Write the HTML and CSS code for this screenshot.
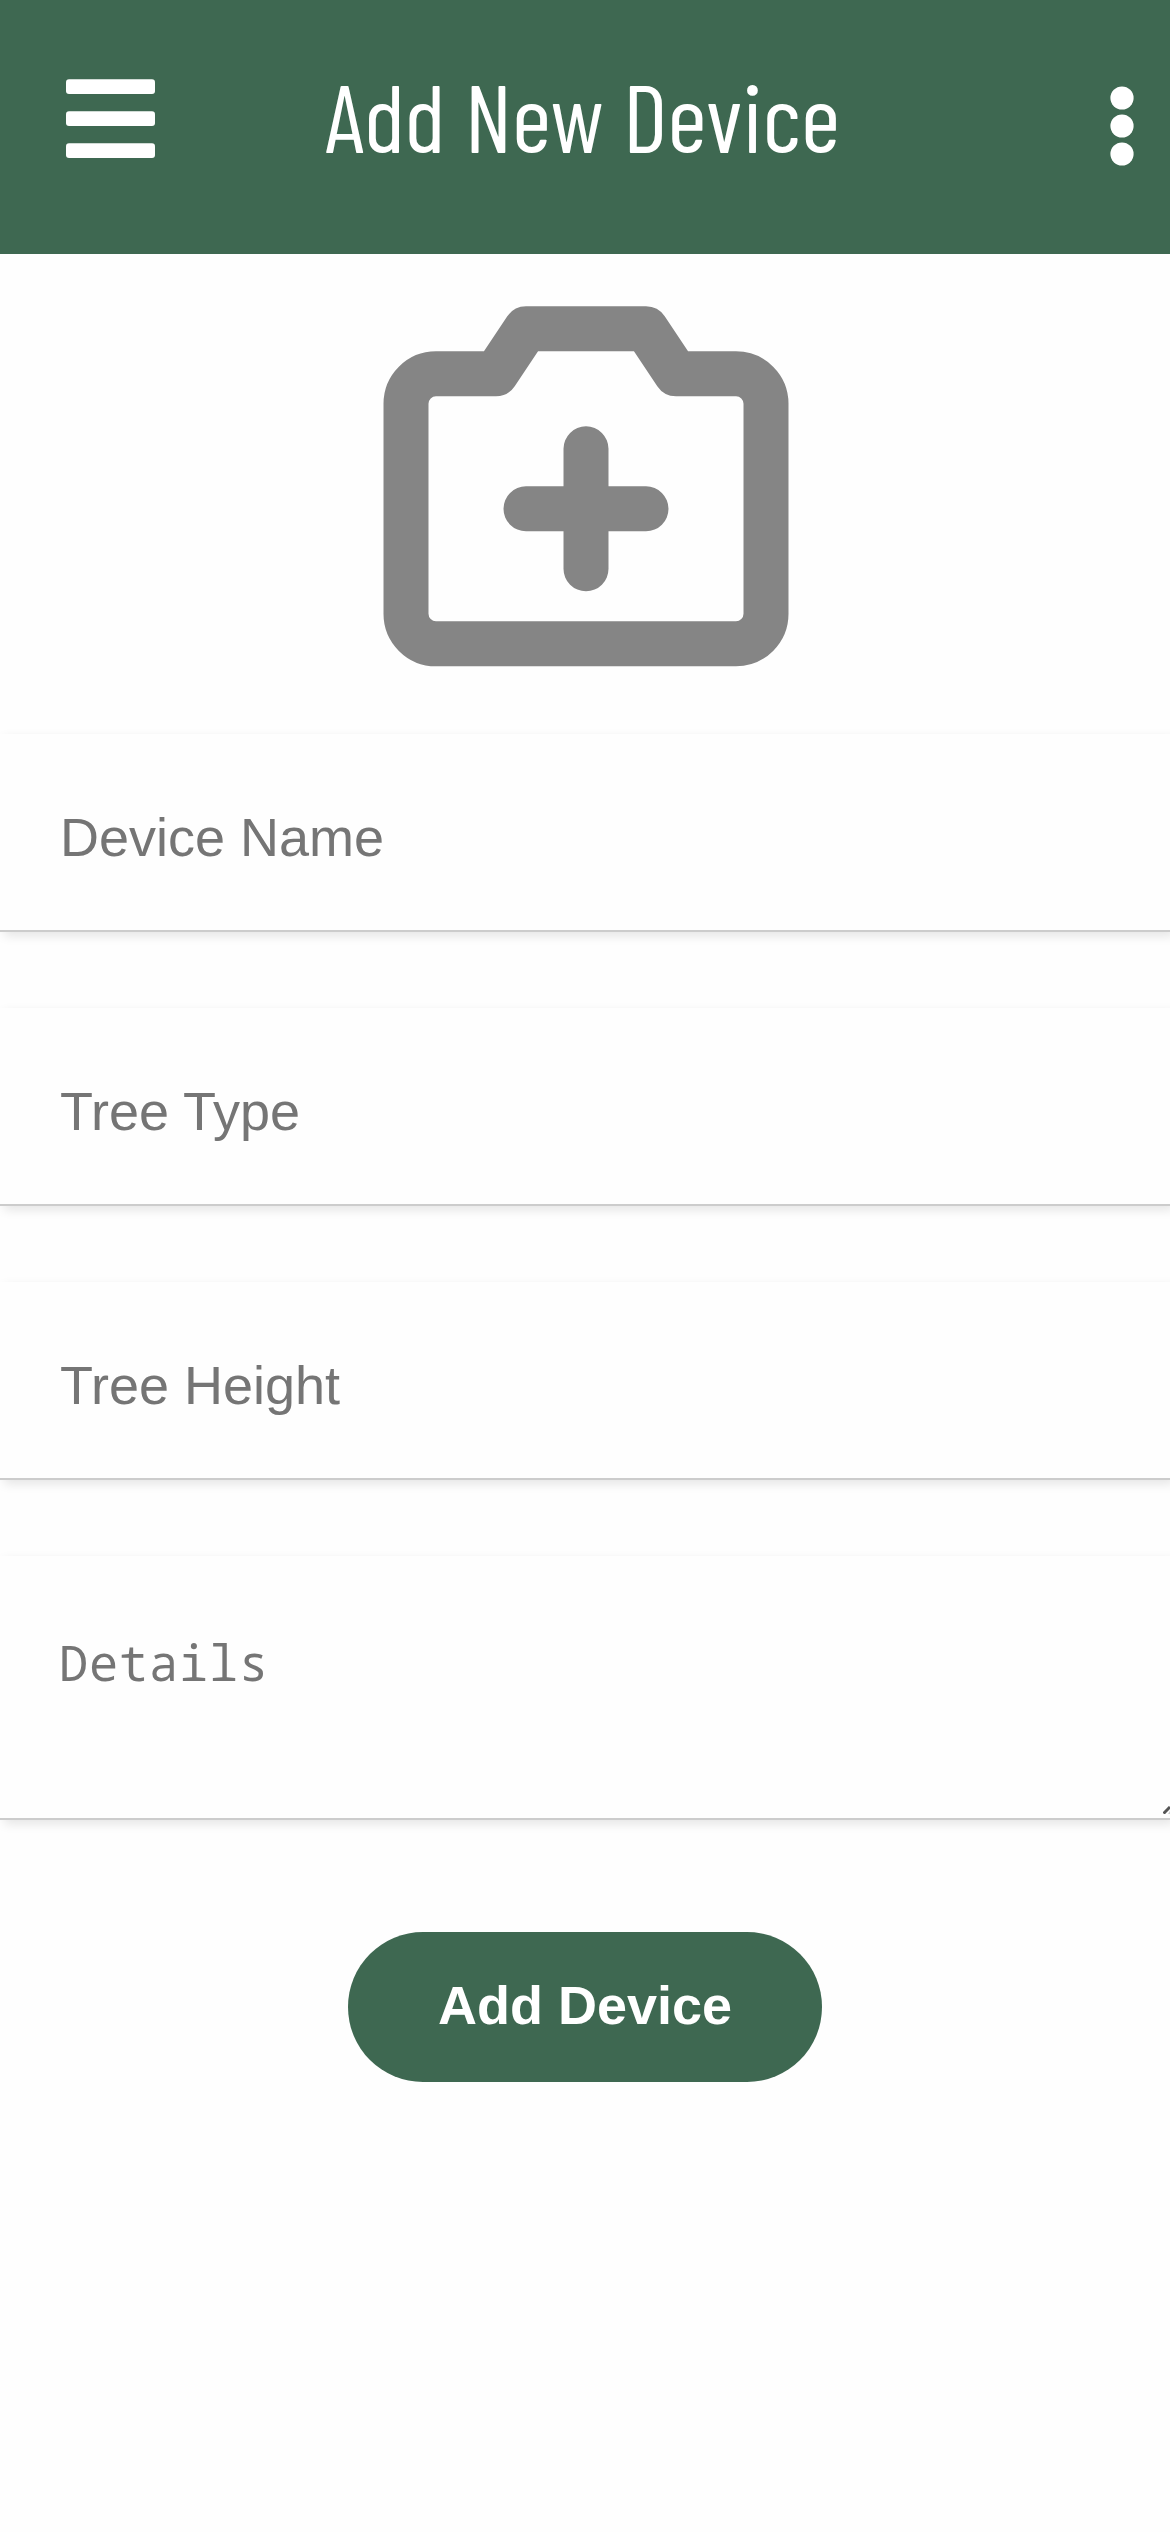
FILE: index.html
```html
<!DOCTYPE html>
<html lang="en">
<head>
<meta charset="utf-8">
<title>Add New Device</title>
<link rel="stylesheet" href="styles.css">
</head>
<body>
<header class="topbar">
  <svg class="menu" viewBox="0 0 89 80" fill="#fff" aria-label="Menu">
    <rect y="0.3" width="89" height="14.7" rx="3"/>
    <rect y="32.3" width="89" height="14.7" rx="3"/>
    <rect y="64.2" width="89" height="14.7" rx="3"/>
  </svg>
  <h1 class="title">Add New Device</h1>
  <svg class="more" viewBox="0 0 24 80" fill="#fff" aria-label="More">
    <circle cx="12" cy="12" r="11.6"/>
    <circle cx="12" cy="40" r="11.6"/>
    <circle cx="12" cy="68" r="11.6"/>
  </svg>
</header>
<main class="page">
  <svg class="camera" viewBox="0 0 406 361" fill="none" stroke="#858585" stroke-width="45" stroke-linecap="round" stroke-linejoin="round" aria-label="Add photo">
    <path d="M23 97.8a30 30 0 0 1 30-30h60l30-45h120l30 45h60a30 30 0 0 1 30 30v210a30 30 0 0 1-30 30H53a30 30 0 0 1-30-30z"/>
    <path d="M143 202.8h120M203 142.8v120"/>
  </svg>
  <form class="form">
    <input class="field" type="text" placeholder="Device Name">
    <input class="field" type="text" placeholder="Tree Type">
    <input class="field" type="text" placeholder="Tree Height">
    <div class="details">
      <textarea class="field field-area" placeholder="Details"></textarea>
      <svg class="grip" viewBox="0 0 7 8" aria-hidden="true"><path d="M0.5 7.5L7 1" stroke="#555" stroke-width="3"/><path d="M5 8h2V5z" fill="#ccc"/></svg>
    </div>
    <button class="submit" type="button">Add Device</button>
  </form>
</main>
</body>
</html>
```

FILE: styles.css
```css
* {
  box-sizing: border-box;
}

body {
  margin: 0;
  min-height: 2532px;
  background: #fefefe;
  font-family: "Liberation Sans", Arial, sans-serif;
  overflow-x: hidden;
}

.topbar {
  display: flex;
  align-items: flex-start;
  height: 254px;
  padding: 79px 36px 0 66px;
  background: #3e6851;
}

.menu {
  width: 89px;
  height: 80px;
}

.more {
  width: 24px;
  height: 80px;
  margin: 7px 0 0 auto;
}

.title {
  margin: -19px 0 0 170px;
  color: #fff;
  font: 400 96px/110px "Barlow Condensed", Roboto, sans-serif;
  white-space: nowrap;
}

.page {
  display: flex;
  flex-direction: column;
  align-items: center;
  padding-top: 52px;
}

.camera {
  width: 406px;
  height: 361px;
  margin-left: 2px;
}

.form {
  display: flex;
  flex-direction: column;
  align-items: center;
  width: 100%;
  gap: 76px;
  margin-top: 67px;
}

.field {
  display: block;
  width: 100%;
  height: 198px;
  padding: 9px 60px 0;
  border: 0;
  border-bottom: 2px solid #ccc;
  border-radius: 0;
  outline: 0;
  background: #fefefe;
  box-shadow: 4px 4px 10px rgba(0, 0, 0, 0.1);
  font: 54px "Liberation Sans", Arial, sans-serif;
}

.field::placeholder {
  color: #757575;
  opacity: 1;
}

.details {
  position: relative;
  width: 100%;
}

.field-area {
  height: 264px;
  padding: 77px 59px 0;
  resize: none;
  overflow: hidden;
  font: 48.5px/58px Consolas, "Noto Sans Mono", "Liberation Mono", monospace;
  letter-spacing: 0.9px;
}

.grip {
  position: absolute;
  right: 0;
  bottom: 6px;
  width: 7px;
  height: 8px;
}

.submit {
  width: 474px;
  height: 150px;
  margin-top: 36px;
  padding: 0 0 5px;
  border: 0;
  border-radius: 75px;
  background: #3e6851;
  color: #fff;
  font: bold 54px "Liberation Sans", Arial, sans-serif;
}
```
